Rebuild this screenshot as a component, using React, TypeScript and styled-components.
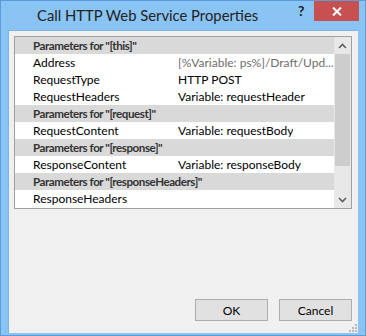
import styled, { createGlobalStyle } from "styled-components";

const GlobalStyle = createGlobalStyle`
  html, body {
    margin: 0;
    padding: 0;
    background: #ffffff;
  }
  body {
    font-family: Lato, "Noto Sans", "Liberation Sans", sans-serif;
  }
`;

interface Row {
  label: string;
  value?: string;
  header?: boolean;
  dim?: boolean;
}

const rows: Row[] = [
  { label: 'Parameters for "[this]"', header: true },
  { label: "Address", value: "[%Variable: ps%]/Draft/Upd...", dim: true },
  { label: "RequestType", value: "HTTP POST" },
  { label: "RequestHeaders", value: "Variable: requestHeader" },
  { label: 'Parameters for "[request]"', header: true },
  { label: "RequestContent", value: "Variable: requestBody" },
  { label: 'Parameters for "[response]"', header: true },
  { label: "ResponseContent", value: "Variable: responseBody" },
  { label: 'Parameters for "[responseHeaders]"', header: true },
  { label: "ResponseHeaders" },
];

const App = () => {
  return (
    <>
      <GlobalStyle />
      <Window>
        <TitleBar>
          <Title>Call HTTP Web Service Properties</Title>
          <HelpButton>?</HelpButton>
          <CloseButton>
            <svg width="10" height="9" viewBox="0 0 10 9">
              <path d="M1 0.5 L9 8.5 M9 0.5 L1 8.5" stroke="#fff" strokeWidth="2" />
            </svg>
          </CloseButton>
        </TitleBar>
        <Client>
          <ListBox>
            <Grid>
              {rows.map((r, i) =>
                r.header ? (
                  <HeaderRow key={i}>{r.label}</HeaderRow>
                ) : (
                  <PropRow key={i}>
                    <Label>{r.label}</Label>
                    <Value $dim={r.dim}>{r.value}</Value>
                  </PropRow>
                )
              )}
            </Grid>
            <ScrollBar>
              <ArrowBox>
                <svg width="9" height="6" viewBox="0 0 9 6">
                  <path d="M1 5 L4.5 1.5 L8 5" fill="none" stroke="#606060" strokeWidth="1.6" />
                </svg>
              </ArrowBox>
              <Thumb />
              <Track />
              <ArrowBox>
                <svg width="9" height="6" viewBox="0 0 9 6">
                  <path d="M1 1 L4.5 4.5 L8 1" fill="none" stroke="#606060" strokeWidth="1.6" />
                </svg>
              </ArrowBox>
            </ScrollBar>
          </ListBox>
          <Footer>
            <DialogButton>OK</DialogButton>
            <DialogButton>Cancel</DialogButton>
          </Footer>
          <Grip>
            <svg width="10" height="10" viewBox="0 0 10 10">
              <g fill="#b8b8b8">
                <rect x="7" y="1" width="2" height="2" />
                <rect x="4" y="4" width="2" height="2" />
                <rect x="7" y="4" width="2" height="2" />
                <rect x="1" y="7" width="2" height="2" />
                <rect x="4" y="7" width="2" height="2" />
                <rect x="7" y="7" width="2" height="2" />
              </g>
            </svg>
          </Grip>
        </Client>
      </Window>
    </>
  );
};

const Window = styled.div`
  width: 366px;
  height: 336px;
  box-sizing: border-box;
  border: 1px solid #5d9ad6;
  background: #8ac4f5;
  display: flex;
  flex-direction: column;
`;

const TitleBar = styled.div`
  height: 29px;
  position: relative;
  display: flex;
  align-items: flex-start;
`;

const Title = styled.div`
  padding-left: 36px;
  padding-top: 5px;
  font-size: 14.8px;
  color: #222;
`;

const HelpButton = styled.div`
  position: absolute;
  left: 297px;
  top: 1px;
  font-size: 14px;
  font-weight: bold;
  color: #1a1a1a;
`;

const CloseButton = styled.div`
  position: absolute;
  left: 313px;
  top: 0;
  width: 45px;
  height: 20px;
  background: #c75050;
  display: flex;
  align-items: center;
  justify-content: center;
`;

const Client = styled.div`
  flex: 1;
  margin: 0 7px 2px 7px;
  background: #f0f0f0;
  border: 1px solid #7db5e6;
  border-bottom: none;
  border-right: none;
  display: flex;
  flex-direction: column;
  padding: 5px 6px 12px 5px;
  position: relative;
`;

const ListBox = styled.div`
  height: 173px;
  box-sizing: border-box;
  border: 1px solid #a0a0a0;
  background: #fff;
  display: flex;
  overflow: hidden;
`;

const Grid = styled.div`
  flex: 1;
  display: flex;
  flex-direction: column;
  font-size: 12px;
  color: #000;
`;

const HeaderRow = styled.div`
  height: 17px;
  line-height: 17px;
  background: #d9d9d9;
  padding-left: 18px;
  font-size: 11.6px;
  font-weight: bold;
  letter-spacing: -0.45px;
  color: #333;
  white-space: nowrap;
  overflow: hidden;
`;

const PropRow = styled.div`
  height: 17px;
  line-height: 17px;
  display: flex;
  padding-left: 18px;
  white-space: nowrap;
`;

const Label = styled.div`
  width: 145px;
  flex-shrink: 0;
`;

const Value = styled.div<{ $dim?: boolean }>`
  color: ${({ $dim }) => ($dim ? "#6d6d6d" : "#000")};
  overflow: hidden;
`;

const ScrollBar = styled.div`
  width: 17px;
  display: flex;
  flex-direction: column;
  background: #e8e8e8;
`;

const ArrowBox = styled.div`
  height: 17px;
  display: flex;
  align-items: center;
  justify-content: center;
`;

const Thumb = styled.div`
  height: 112px;
  margin: 0 1px;
  background: #cdcdcd;
`;

const Track = styled.div`
  flex: 1;
`;

const Footer = styled.div`
  margin-top: auto;
  display: flex;
  justify-content: flex-end;
  gap: 11px;
`;

const DialogButton = styled.button`
  width: 73px;
  height: 22px;
  box-sizing: border-box;
  border: 1px solid #adadad;
  background: #e1e1e1;
  font-family: Lato, "Noto Sans", "Liberation Sans", sans-serif;
  font-size: 12px;
  color: #000;
  padding: 0;
`;

const Grip = styled.div`
  position: absolute;
  right: 0;
  bottom: 0;
  line-height: 0;
`;

export default App;
